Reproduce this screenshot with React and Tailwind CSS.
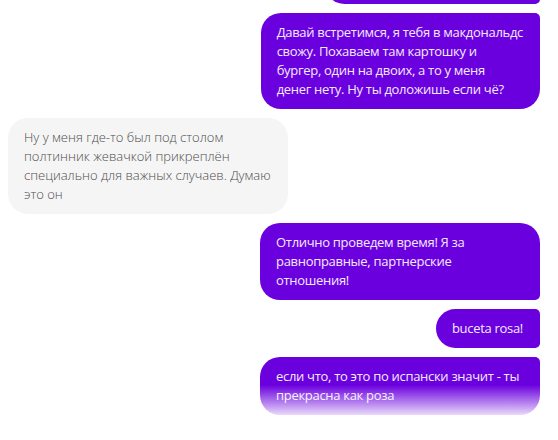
import React from "react";

const messages = [
    { id: 0, mine: true, pos: "first", text: "ну короче не знаю что делать" },
    { id: 1, mine: true, pos: "last", text: "Давай встретимся, я тебя в макдональдс\nсвожу. Похаваем там картошку и\nбургер, один на двоих, а то у меня\nденег нету. Ну ты доложишь если чё?" },
    { id: 2, mine: false, pos: "single", text: "Ну у меня где-то был под столом полтинник жевачкой прикреплён специально для важных случаев. Думаю это он" },
    { id: 3, mine: true, pos: "first", text: "Отлично проведем время! Я за равноправные, партнерские отношения!" },
    { id: 4, mine: true, pos: "middle", text: "buceta rosa!" },
    { id: 5, mine: true, pos: "last", text: "если что, то это по испански значит - ты прекрасна как роза" },
];

const corners = {
    first: "rounded-[20px] rounded-br-[5px]",
    middle: "rounded-[20px] rounded-tr-[5px] rounded-br-[5px]",
    last: "rounded-[20px] rounded-tr-[5px]",
    single: "rounded-[20px]",
};

const Bubble = ({ msg }) => {
    const base = "max-w-[280px] py-[10px] text-[13px] leading-[19px] whitespace-pre-line";

    if (msg.mine) {
        return (
            <div className="flex justify-end">
                <div className={`${base} ${corners[msg.pos]} pl-4 pr-[17px] bg-[#6b00df] text-[#f3ebff] font-normal tracking-[-0.3px]`}>
                    {msg.text}
                </div>
            </div>
        );
    }

    return (
        <div className="flex justify-start">
            <div className={`${base} ${corners[msg.pos]} px-4 bg-[#f5f5f5] text-[#4d4d4d] font-light`}>
                {msg.text}
            </div>
        </div>
    );
};

const App = () => {
    return (
        <div className="relative h-[440px] w-[558px] overflow-hidden bg-white font-['Open_Sans',sans-serif]">
            <div className="mt-[-35px] flex flex-col gap-[9px] pl-2 pr-[18px]">
                {messages.map((msg) => (
                    <Bubble key={msg.id} msg={msg} />
                ))}
            </div>
            <div className="pointer-events-none absolute bottom-0 left-0 right-0 h-[55px] bg-[linear-gradient(to_bottom,rgba(255,255,255,0)_0%,#ffffff_64%)]" />
        </div>
    );
};

export default App;
